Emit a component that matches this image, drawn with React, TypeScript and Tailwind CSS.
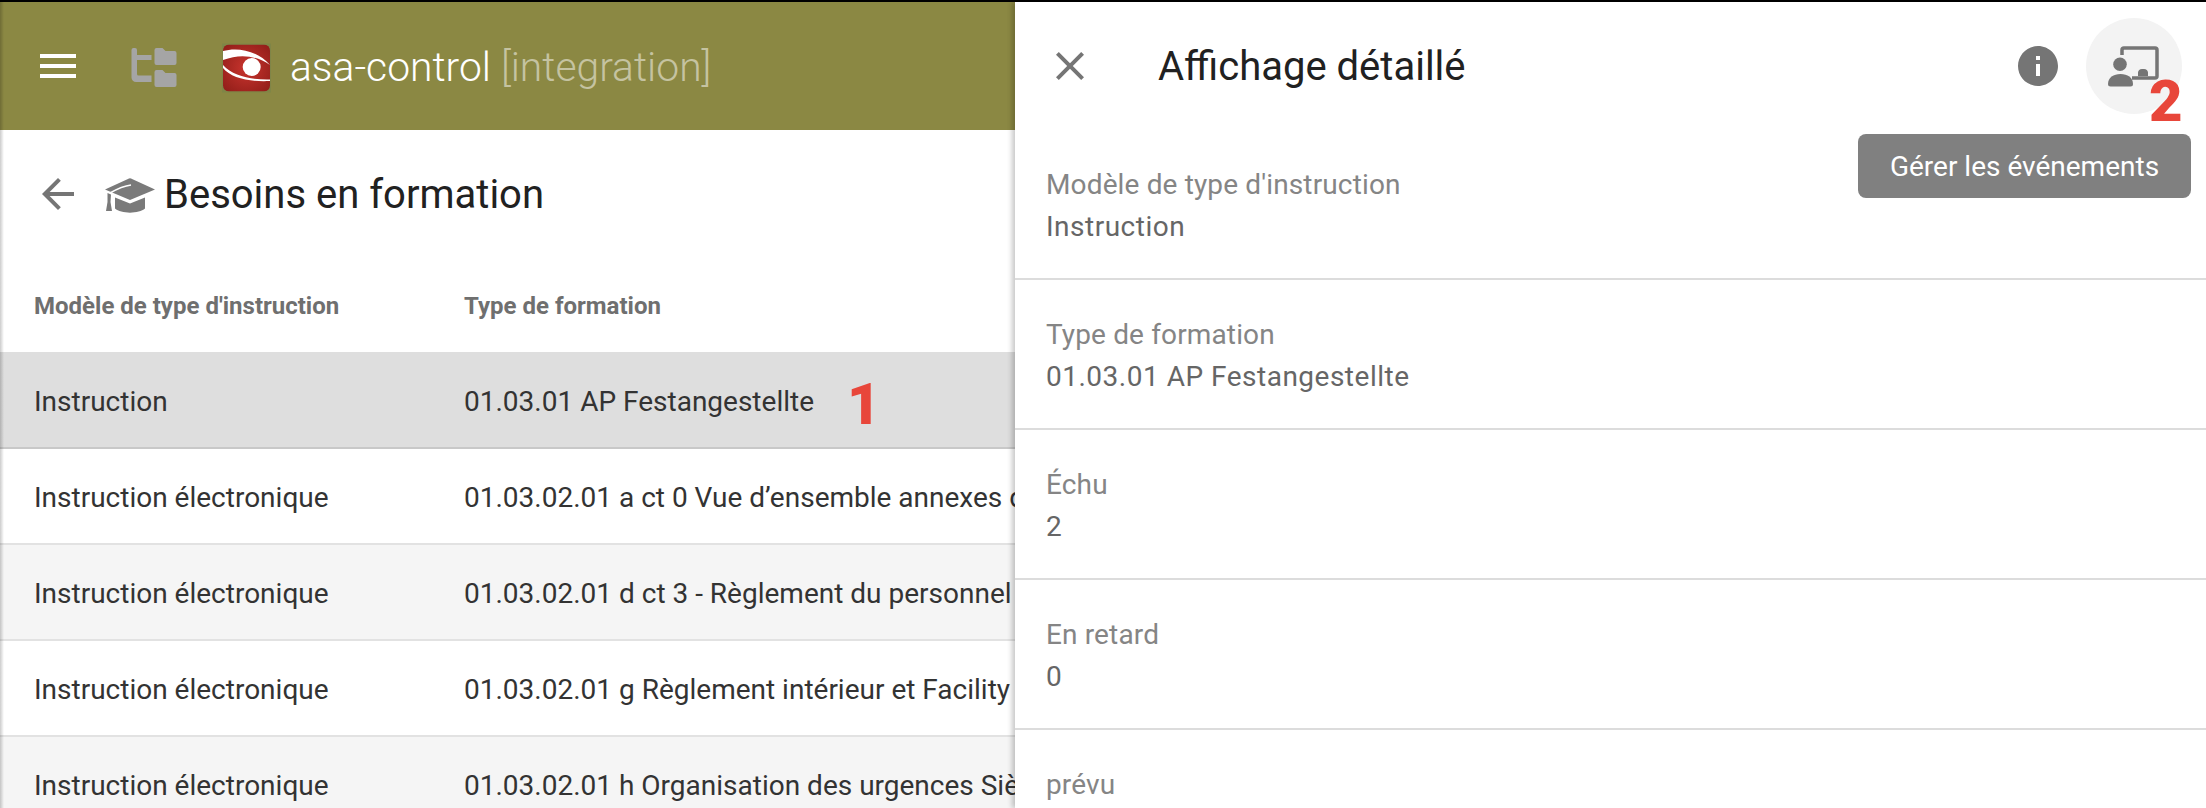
import { MdArrowBack, MdClose, MdInfo, MdMenu } from "react-icons/md";

const rows = [
  { model: "Instruction", type: "01.03.01 AP Festangestellte", selected: true },
  { model: "Instruction électronique", type: "01.03.02.01 a ct 0 Vue d’ensemble annexes du règlement" },
  { model: "Instruction électronique", type: "01.03.02.01 d ct 3 - Règlement du personnel de vol" },
  { model: "Instruction électronique", type: "01.03.02.01 g Règlement intérieur et Facility Management" },
  { model: "Instruction électronique", type: "01.03.02.01 h Organisation des urgences Siège" },
];

const details = [
  { label: "Modèle de type d'instruction", value: "Instruction" },
  { label: "Type de formation", value: "01.03.01 AP Festangestellte" },
  { label: "Échu", value: "2" },
  { label: "En retard", value: "0" },
  { label: "prévu", value: "0" },
];

function TreeIcon() {
  return (
    <svg viewBox="0 0 60 50" className="h-[50px] w-[60px] fill-[#a5a5a5]">
      <path d="M6.5 9a2 2 0 0 1 2-2h1.5a2 2 0 0 1 2 2v5h14.5v5H12v14a1.5 1.5 0 0 0 1.5 1.5h13V41H11a4.500 4.500 0 0 1-4.500-4.500z" />
      <path d="M29.500 9a2 2 0 0 1 2-2h6l3 3h9a2 2 0 0 1 2 2v10a2 2 0 0 1-2 2h-18a2 2 0 0 1-2-2z" />
      <path d="M29.500 31a2 2 0 0 1 2-2h6l3 3h9a2 2 0 0 1 2 2v10a2 2 0 0 1-2 2h-18a2 2 0 0 1-2-2z" />
    </svg>
  );
}

function Logo() {
  return (
    <svg viewBox="0 0 62 56" className="h-14 w-[62px]">
      <defs>
        <radialGradient id="logoRed" cx="50%" cy="50%" r="70%">
          <stop offset="0%" stopColor="#c9342e" />
          <stop offset="100%" stopColor="#8f1d18" />
        </radialGradient>
        <clipPath id="logoClip">
          <rect x="8" y="6.500" width="47" height="47" rx="6" />
        </clipPath>
      </defs>
      <rect x="7" y="5.500" width="49" height="49" fill="#7f8547" />
      <g clipPath="url(#logoClip)">
        <rect x="8" y="6.500" width="47" height="47" fill="url(#logoRed)" />
        <path d="M8 13C22 9 42 12 55 27C42 18 26 15 8 22z" fill="#fff" />
        <path d="M8 27C18 38 36 42 55 41.500L55 43C34 44 16 40 8 30z" fill="#fff" />
        <circle cx="36.700" cy="29" r="9" fill="#fff" />
      </g>
    </svg>
  );
}

function CapIcon() {
  return (
    <svg viewBox="0 0 70 50" className="h-[50px] w-[70px] fill-[#7a7a7a]">
      <path d="M10 20.500L34 9.500a3 3 0 0 1 2 0L60 20.500L35 31z" />
      <path d="M20 28.500L35 34.500L50 28.500V39.500C44 45 26 45 20 39.500z" />
      <path d="M12.500 24L16 25.500L15.500 33L17 42H11L12.500 33z" />
      <path d="M15 24C22 20 28 17 36 16" fill="none" stroke="#fff" strokeWidth="1.500" />
    </svg>
  );
}

function PresenterIcon() {
  return (
    <svg viewBox="0 0 80 60" className="h-[60px] w-20 fill-[#757575]">
      <path d="M28 19v-5a2 2 0 0 1 2-2h31a2 2 0 0 1 2 2v26a2 2 0 0 1-2 2H38" fill="none" stroke="#757575" strokeWidth="3.500" />
      <path d="M44 40v-3.500a4 4 0 0 1 4-3.500h2a4 4 0 0 1 4 3.500V40z" />
      <circle cx="26" cy="28.300" r="6.800" />
      <path d="M14 48c0-6.500 5.500-10 12.500-10S39 41.500 39 48a2.500 2.500 0 0 1-2.500 2.500h-20A2.500 2.500 0 0 1 14 48z" />
    </svg>
  );
}

export default function App() {
  return (
    <div className="relative flex h-[808px] w-[2206px] flex-col overflow-hidden bg-white font-['Roboto',sans-serif]">
      <div className="h-[2px] shrink-0 bg-black" />
      <div className="flex min-h-0 flex-1">
        {/* liste à gauche */}
        <div className="relative w-[1015px] shrink-0 overflow-hidden">
          <header className="flex h-[128px] items-center bg-[#8b8843] pl-[34px]">
            <MdMenu className="size-12 text-white" />
            <div className="ml-[43px]">
              <TreeIcon />
            </div>
            <div className="ml-[30px]">
              <Logo />
            </div>
            <div className="ml-[13px] whitespace-nowrap pt-[3px] text-[40.8px] font-light leading-none text-white">
              asa-control <span className="text-[#c5c3a1]">[integration]</span>
            </div>
          </header>

          <div className="flex h-[128px] items-center pl-[34px]">
            <MdArrowBack className="size-12 text-[#757575]" />
            <div className="ml-[13px]">
              <CapIcon />
            </div>
            <h1 className="-ml-px whitespace-nowrap pt-[2px] text-[40px] font-normal text-[#212121]">Besoins en formation</h1>
          </div>

          <div className="flex h-[94px] items-center pl-[34px] pt-[2px] text-[24px] font-bold text-[#6f6f6f]">
            <div className="w-[430px]">Modèle de type d'instruction</div>
            <div>Type de formation</div>
          </div>

          {rows.map((row, i) => (
            <div
              key={row.type}
              className={
                row.selected
                  ? "relative flex h-[97px] items-center border-b-2 border-[#c8c8c8] bg-[#dedede] pl-[34px] pt-[4px] text-[28px] text-[#333333]"
                  : i % 2 === 1
                    ? "flex h-[96px] items-center border-b-2 border-[#e2e2e2] bg-white pl-[34px] pt-[4px] text-[28px] text-[#333333]"
                    : "flex h-[96px] items-center border-b-2 border-[#e2e2e2] bg-[#f5f5f5] pl-[34px] pt-[4px] text-[28px] text-[#333333]"
              }
            >
              <div className="w-[430px] shrink-0 whitespace-nowrap">{row.model}</div>
              <div className="whitespace-nowrap">{row.type}</div>
              {row.selected && (
                <span className="absolute left-[847px] top-[23px] text-[58px] font-black leading-none text-[#e8463a]">
                  1
                </span>
              )}
            </div>
          ))}

          {/* ombre du bord gauche */}
          <div className="pointer-events-none absolute inset-y-0 left-0 w-[4px] bg-gradient-to-r from-black/20 to-transparent" />
        </div>

        {/* panneau détail */}
        <aside className="relative z-10 min-w-0 flex-1 bg-white shadow-[-3px_0_5px_rgba(0,0,0,0.22)]">
          <div className="flex h-[128px] items-center pl-[31px]">
            <MdClose className="size-12 text-[#757575]" />
            <h2 className="ml-[64px] whitespace-nowrap pt-[2px] text-[40px] font-normal text-[#212121]">Affichage détaillé</h2>
            <MdInfo className="ml-auto size-12 text-[#757575]" />
            <div className="ml-[24px] mr-[24px] flex size-24 items-center justify-center rounded-full bg-[#f3f3f3]">
              <PresenterIcon />
            </div>
          </div>

          {details.map((d) => (
            <div key={d.label} className="flex h-[150px] flex-col justify-center border-b-2 border-[#dcdcdc] pl-[31px] pt-[3px] text-[28px] leading-[42px]">
              <div className="tracking-[0.005em] text-[#858585]">{d.label}</div>
              <div className="tracking-[0.5px] text-[#666666]">{d.value}</div>
            </div>
          ))}

          <div className="absolute left-[843px] top-[132px] flex h-16 w-[333px] items-center justify-center rounded-lg bg-[#808080] pt-[2px] text-[28px] text-white">
            Gérer les événements
          </div>
          <span className="absolute left-[1134px] top-[70px] text-[58px] font-black leading-none text-[#e8463a]">2</span>
        </aside>
      </div>
    </div>
  );
}
